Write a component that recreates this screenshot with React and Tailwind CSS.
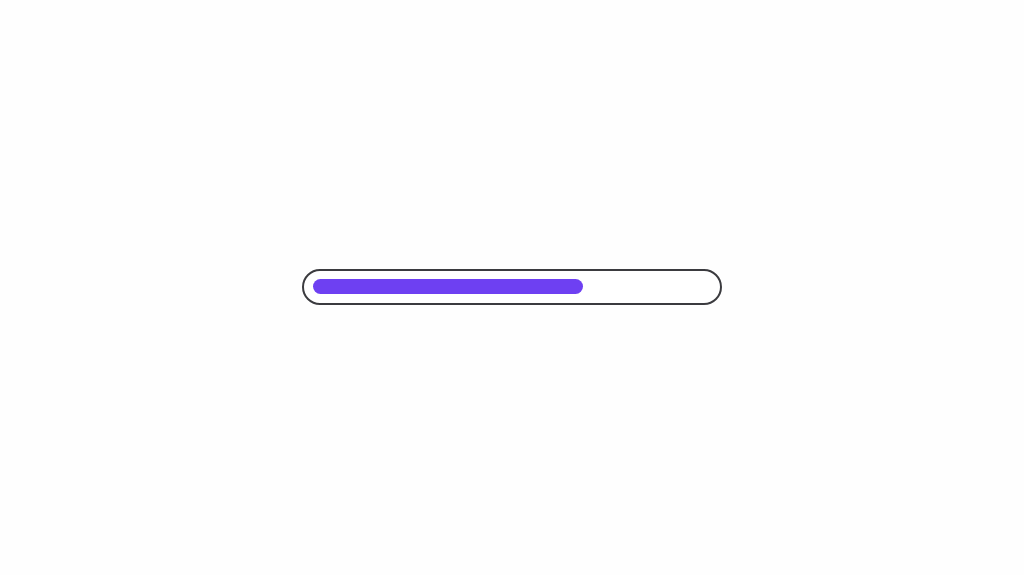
export default function App() {
  return (
    <div className="flex h-[575px] w-full items-center justify-center bg-[#fefefe] pb-[2px]">
      <div className="flex h-[36px] w-[420px] items-center rounded-full border-[2.5px] border-[#3b3b3f] bg-white px-[8.5px]">
        <div className="h-[15px] w-[270px] rounded-full bg-[#6e40f2]" />
      </div>
    </div>
  );
}
